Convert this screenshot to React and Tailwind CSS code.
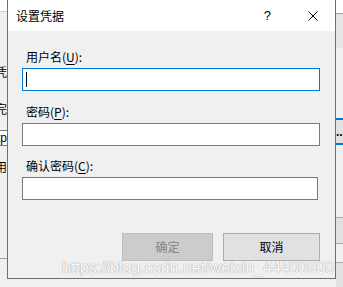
import { useState } from 'react';

const font = { fontFamily: '"Noto Sans CJK SC", "Noto Sans", sans-serif' };

const Field = ({ label, hotkey, active, inputClass = 'w-[298px]', className = '' }) => (
  <div className={className}>
    <div className="h-4 leading-4 text-[12px] text-black pl-[4px]">
      {label}(<span className="underline underline-offset-2">{hotkey}</span>):
    </div>
    <div
      className={`mt-[3px] h-[23px] bg-white border flex items-center pl-[3px] ${inputClass} ${
        active ? 'border-[#0078d7]' : 'border-[#7a7a7a]'
      }`}
    >
      {active && <div className="w-px h-[15px] bg-black" />}
    </div>
  </div>
);

const LeftStrip = () => (
  <div className="w-[7px] shrink-0 flex flex-col text-[12px] leading-4 text-black">
    <div className="h-[11px] bg-white" />
    <div className="h-px bg-[#cfcfcf]" />
    <div className="h-[52px]" />
    <div className="flex justify-end whitespace-nowrap overflow-hidden">凭</div>
    <div className="h-[21px]" />
    <div className="flex justify-end whitespace-nowrap overflow-hidden">完</div>
    <div className="h-[13px]" />
    <div className="h-[16px] bg-white border-y border-[#7a7a7a] flex justify-end overflow-hidden leading-[14px] text-[12px] font-['Liberation_Sans',sans-serif]">
      http
    </div>
    <div className="h-[13px]" />
    <div className="flex justify-end whitespace-nowrap overflow-hidden">使用</div>
    <div className="h-[83px]" />
    <div className="h-px bg-[#a0a0a0]" />
  </div>
);

const RightStrip = () => (
  <div className="w-[7px] shrink-0 flex flex-col">
    <div className="h-[13px] bg-white" />
    <div className="h-px bg-[#a0a0a0]" />
    <div className="h-[34px] bg-[#e6e6e6]" />
    <div className="h-[70px]" />
    <div className="h-[27px] bg-[#e1e1e1] border-y-2 border-[#0078d7] flex items-center overflow-hidden text-[12px] leading-none font-['Liberation_Sans',sans-serif] font-bold">
      ..
    </div>
    <div className="h-[72px]" />
    <div className="h-[27px] bg-[#e1e1e1] border-y border-[#adadad]" />
    <div className="h-[18px]" />
    <div className="h-[27px] bg-[#e1e1e1] border-t border-[#adadad]" />
  </div>
);

export default function App() {
  const [user] = useState('');

  return (
    <div className="relative w-[343px] h-[287px] overflow-hidden bg-[#f0f0f0]" style={font}>
      <div className="flex">
        <LeftStrip />
        <div className="w-[329px] h-[280px] -mt-px shrink-0 border border-[#707070] flex flex-col bg-[#f0f0f0]">
          <div className="h-[31px] bg-white flex items-center pl-[8px] text-[12px] text-black">
            <span>设置凭据</span>
            <span className="ml-auto mr-[37px] text-[13px] font-['Liberation_Sans',sans-serif]">?</span>
            <svg className="mr-[17px]" width="10" height="10" viewBox="0 0 10 10">
              <path d="M0.5 0.5 L9.5 9.5 M9.5 0.5 L0.5 9.5" stroke="#000" strokeWidth="1" />
            </svg>
          </div>
          <div className="flex-1 pl-[14px] pt-[18px]">
            <Field label="用户名" hotkey="U" active={user === ''} />
            <Field label="密码" hotkey="P" className="mt-[13px]" />
            <Field label="确认密码" hotkey="C" inputClass="w-[296px]" className="mt-[12px]" />
            <div className="mt-[33px] flex gap-[10px] pl-[100px]">
              <button
                disabled
                className="w-[91px] h-[28px] bg-[#cccccc] border border-[#bfbfbf] text-[12px] text-[#838383]"
              >
                确定
              </button>
              <button className="w-[97px] h-[28px] bg-[#e1e1e1] border border-[#adadad] text-[12px] text-black">
                取消
              </button>
            </div>
          </div>
        </div>
        <RightStrip />
      </div>
      <div className="absolute left-[62px] top-[260px] whitespace-nowrap text-[16px] leading-none text-[#fbfbfb] font-['Liberation_Sans',sans-serif] [text-shadow:0_0_1px_#a8a8a8,0_0_1px_#a8a8a8]">
        https://blog.csdn.net/weixin_44400900
      </div>
    </div>
  );
}
